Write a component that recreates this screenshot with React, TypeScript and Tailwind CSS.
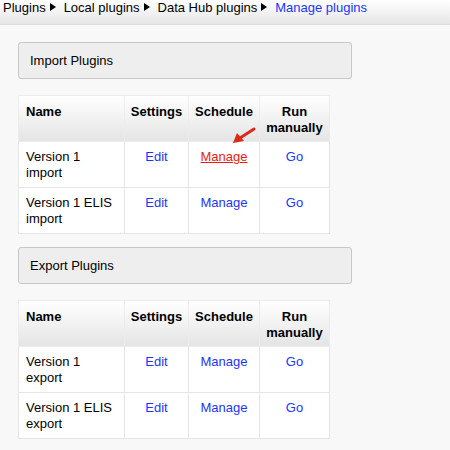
import React from 'react';

interface PluginRow {
  name: string[];
  highlight?: boolean;
}

const linkBlue = 'text-[#1a35ff]';

const Sep: React.FC = () => (
  <span className="inline-block ml-[4px] mr-[8px] w-0 h-0 border-y-[4px] border-y-transparent border-l-[6px] border-l-black align-[1px]" />
);

const SectionHeader: React.FC<{ title: string }> = ({ title }) => (
  <div className="w-[334px] h-[37px] rounded-[3px] border border-[#c8c8c8] bg-[#eeeeee] flex items-center pl-[11px] text-[13px] text-black">
    {title}
  </div>
);

const PluginTable: React.FC<{ rows: PluginRow[] }> = ({ rows }) => (
  <table className="border-collapse bg-white text-[13px] leading-[16px] text-black">
    <colgroup>
      <col className="w-[106px]" />
      <col className="w-[64px]" />
      <col className="w-[71px]" />
      <col className="w-[70px]" />
    </colgroup>
    <thead>
      <tr className="h-[46px] bg-gradient-to-b from-white to-[#e4e4e4]">
        <th className="border border-[#ececec] px-[7px] pt-[8px] pb-[5px] text-left align-top font-bold">Name</th>
        <th className="border border-[#ececec] pt-[8px] pb-[5px] text-center align-top font-bold">Settings</th>
        <th className="border border-[#ececec] pt-[8px] pb-[5px] text-center align-top font-bold">Schedule</th>
        <th className="border border-[#ececec] pt-[8px] pb-[5px] text-center align-top font-bold">
          Run
          <br />
          manually
        </th>
      </tr>
    </thead>
    <tbody>
      {rows.map((row, i) => (
        <tr key={i} className="h-[46px]">
          <td className="border border-[#e6e6e6] px-[7px] pt-[7px] pb-[5px] align-top">
            {row.name[0]}
            <br />
            {row.name[1]}
          </td>
          <td className={`border border-[#e6e6e6] pt-[7px] pb-[5px] text-center align-top ${linkBlue}`}>Edit</td>
          <td className="border border-[#e6e6e6] pt-[7px] pb-[5px] text-center align-top">
            {row.highlight ? (
              <span className="text-[#ee1c0e] underline">Manage</span>
            ) : (
              <span className={linkBlue}>Manage</span>
            )}
          </td>
          <td className={`border border-[#e6e6e6] pt-[7px] pb-[5px] text-center align-top ${linkBlue}`}>Go</td>
        </tr>
      ))}
    </tbody>
  </table>
);

export default function App() {
  const importRows: PluginRow[] = [
    { name: ['Version 1', 'import'], highlight: true },
    { name: ['Version 1 ELIS', 'import'] },
  ];
  const exportRows: PluginRow[] = [
    { name: ['Version 1', 'export'] },
    { name: ['Version 1 ELIS', 'export'] },
  ];

  return (
    <div className="w-[450px] h-[450px] bg-[#f8f8f8] overflow-hidden font-['Liberation_Sans',Arial,sans-serif]">
      {/* Breadcrumb */}
      <div className="h-[25px] bg-gradient-to-b from-white to-[#e6e6e6] border-b border-[#dcdcdc] pl-[3px] pt-[0px] text-[13px] leading-[16px] text-black whitespace-nowrap">
        Plugins<Sep />Local plugins<Sep />Data Hub plugins<Sep />
        <span className="text-[#1a35ff]">Manage plugins</span>
      </div>

      <div className="pl-[18px] pt-[17px] flex flex-col">
        <SectionHeader title="Import Plugins" />
        <div className="mt-[16px] relative">
          <PluginTable rows={importRows} />
          {/* red pointer arrow */}
          <svg className="absolute left-[211px] top-[30px]" width="30" height="20" viewBox="0 0 30 20">
            <line x1="25" y1="4" x2="11" y2="13" stroke="#dd2a18" strokeWidth="3" strokeLinecap="round" />
            <polygon points="4,18 8,8 15,16" fill="#dd2a18" />
          </svg>
        </div>
        <div className="mt-[13px]">
          <SectionHeader title="Export Plugins" />
        </div>
        <div className="mt-[16px]">
          <PluginTable rows={exportRows} />
        </div>
      </div>
    </div>
  );
}
